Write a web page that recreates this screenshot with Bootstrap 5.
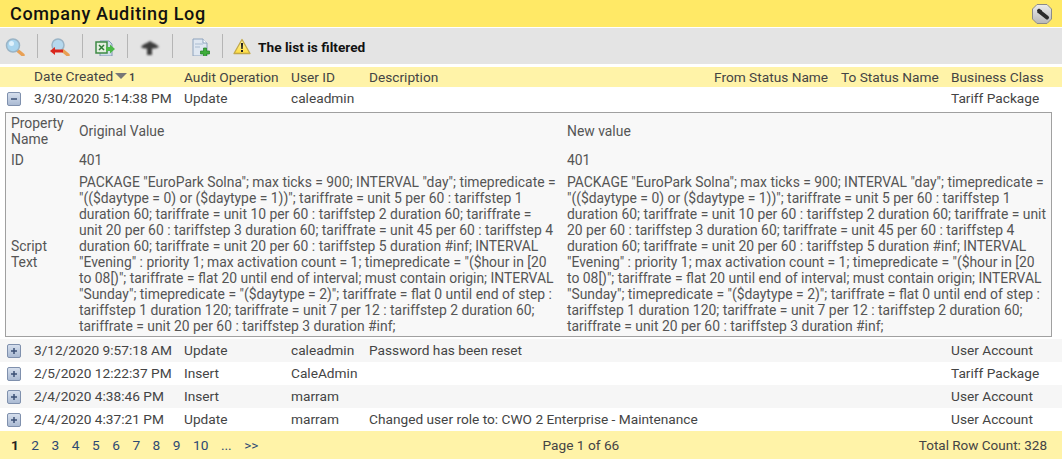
<!DOCTYPE html>
<html lang="en">
  <head>
    <meta charset="UTF-8" />
    <title>Company Auditing Log</title>
    <link rel="stylesheet" href="https://cdn.jsdelivr.net/npm/bootstrap@5.3.6/dist/css/bootstrap.min.css" />
    <style>
      body { font-family: Roboto, "Liberation Sans", sans-serif; font-size: 13.7px; line-height: 16px; color: #444; background: #fff; overflow: hidden; }
      .title-bar { height: 27px; background: #ffe966; padding: 0 10px 0 10px; }
      .title-bar h1 { font-size: 18px; font-weight: 500; letter-spacing: .65px; color: #111; margin: 0; line-height: 27px; }
      .tool-bar { height: 36px; margin-top: 1px; background: #e4e4e4; padding-left: 5px; }
      .tool-icon { width: 20px; height: 20px; display: block; }
      .tool-sep { width: 1px; height: 24px; background: #b5b5b5; margin: 0 12px; }
      .tool-sep-last { margin: 0 10px 0 11px; }
      .icon-new { margin-left: 6px; }
      .icon-soft { filter: blur(1px); }
      .filter-note { font-weight: 700; color: #111; margin-left: 7px; padding-top: 1px; }
      .log-table { table-layout: fixed; width: 1062px; margin: 3px 0 0; border-collapse: collapse; font-size: 13.7px; line-height: 16px; }
      .log-table td, .log-table th { padding: 0 0 0 6px; height: 23px; font-weight: 400; color: #444; white-space: nowrap; vertical-align: middle; border: 0; background: transparent; box-shadow: none; }
      .log-table tbody td:not(:first-child) { padding-bottom: 2px; }
      .log-table thead th { height: 20px; background: #fff3a8; }
      .log-table .shaded td { background: #f6f6f6; }
      .c-toggle { width: 28px; }
      .c-date { width: 150px; }
      .c-op { width: 107px; }
      .c-user { width: 78px; }
      .c-desc { width: 345px; }
      .c-from { width: 127px; }
      .c-to { width: 110px; }
      .toggle-box { width: 14px; height: 14px; display: block; margin-left: 1px; }
      .sort-mark { display: inline-block; width: 0; height: 0; border: 6px solid transparent; border-top: 6px solid #777; border-bottom: 0; margin: 0 2px 0 2px; vertical-align: 2px; }
      .sort-num { font-size: 10px; font-weight: 700; color: #444; }
      .log-table td.detail-cell { padding: 2px 10px 2px 5px; height: auto; white-space: normal; }
      .detail-box { border: 1px solid #a0a0a0; background: #f8f8f8; height: 225px; display: grid; grid-template-columns: 68px 488px 1fr; grid-template-rows: 36px 22px 165px; padding-left: 5px; color: #555; font-size: 13.9px; }
      .detail-box > div { align-self: center; }
      .detail-label { width: 50px; }
      .script-old { padding-right: 10px; }
      .script-new { padding-right: 3px; }
      .pager-bar { height: 28px; background: #fff3a8; padding: 0 15px 0 11px; }
      .pager-links { width: 249px; }
      .pager-links a { color: #2d4a73; text-decoration: none; margin-right: 12.5px; }
      .pager-links b { color: #222; margin-right: 12.5px; font-weight: 700; }
      .pager-mid { padding-right: 17px; }
      .pager-total { font-size: 13.5px; }
    </style>
  </head>

  <body>
    <header class="title-bar d-flex align-items-center justify-content-between">
      <h1>Company Auditing Log</h1>
      <svg width="20" height="20" viewBox="0 0 20 20">
        <defs><linearGradient id="gb" x1="0" y1="0" x2="0" y2="1"><stop offset="0" stop-color="#ececec"/><stop offset="1" stop-color="#b8b8b8"/></linearGradient></defs>
        <path d="M5 .5h10L19.500 5v10L15 19.500H5L.5 15V5z" fill="url(#gb)" stroke="#8a8a8a"/>
        <path d="M8 8l7 5.500" stroke="#2b2b2b" stroke-width="4" stroke-linecap="round"/>
        <path d="M7 4.500l3 2-1 3-3.500-.5-.5-3z" fill="#2b2b2b"/>
      </svg>
    </header>

    <div class="tool-bar d-flex align-items-center">
      <svg class="tool-icon" viewBox="0 0 20 20">
        <path d="M12 14l6 5" stroke="#e8a055" stroke-width="3.500" stroke-linecap="round"/>
        <circle cx="8" cy="9.500" r="6.500" fill="#a8d4ee" stroke="#9ab4c6" stroke-width="1.500"/>
        <circle cx="6.500" cy="7.500" r="2.500" fill="#dff1fb"/>
      </svg>
      <span class="tool-sep"></span>
      <svg class="tool-icon" viewBox="0 0 20 20">
        <path d="M12 14l6 5" stroke="#e8a055" stroke-width="3.500" stroke-linecap="round"/>
        <circle cx="8" cy="9" r="6" fill="#b5d8ee" stroke="#9ab4c6" stroke-width="1.500"/>
        <path d="M0 15l5-4v2.500h8v3H5v2.500z" fill="#d9261c"/>
      </svg>
      <span class="tool-sep"></span>
      <svg class="tool-icon" viewBox="0 0 20 20">
        <path d="M5 5h9l3 3v12H5z" fill="#cfdcea" stroke="#7f97b3"/>
        <rect x="1" y="6" width="11" height="11" fill="#e3eee0" stroke="#3e8a45" stroke-width="1.500"/>
        <path d="M4 9l5 5M9 9l-5 5" stroke="#2f7d38" stroke-width="1.500"/>
        <path d="M11 11h4V8.500l5 4.500-5 4.500V15h-4z" fill="#4cb848"/>
      </svg>
      <span class="tool-sep"></span>
      <svg class="tool-icon icon-soft" viewBox="0 0 20 20">
        <path d="M10 5l3 2c2 .5 4 2 6 4-2 1.500-5 1.500-7 1.500V19H7v-6.500c-2 0-5 0-6-1.500 1.500-2 4-3.500 6-4z" fill="#3c3c3c"/>
      </svg>
      <span class="tool-sep"></span>
      <svg class="tool-icon icon-new" viewBox="0 0 20 20">
        <path d="M2 3h10l4 4v13H2z" fill="#dfe7f1" stroke="#8ea3bd"/>
        <path d="M4 8h8M4 11h5" stroke="#a9bbd0"/>
        <path d="M12 3v4h4" fill="#fff" stroke="#8ea3bd"/>
        <path d="M12.500 12h3v3h3v3h-3v2.500h-3V18h-3v-3h3z" fill="#3fae3b" stroke="#1f7d22" stroke-width=".7"/>
      </svg>
      <span class="tool-sep tool-sep-last"></span>
      <svg width="18" height="17" viewBox="0 0 18 17">
        <defs><linearGradient id="wg" x1="0" y1="0" x2="0" y2="1"><stop offset="0" stop-color="#fff6b0"/><stop offset="1" stop-color="#ffdc3c"/></linearGradient></defs>
        <path d="M9 1.500l8 14H1z" fill="url(#wg)" stroke="#c2a94a" stroke-width="1.300" stroke-linejoin="round"/>
        <path d="M7.900 5h2.200l-.4 6H8.300z M8 12h2v2H8z" fill="#222"/>
      </svg>
      <span class="filter-note">The list is filtered</span>
    </div>

    <table class="table log-table">
      <colgroup>
        <col class="c-toggle" /><col class="c-date" /><col class="c-op" /><col class="c-user" /><col class="c-desc" /><col class="c-from" /><col class="c-to" /><col />
      </colgroup>
      <thead>
        <tr>
          <th></th>
          <th>Date Created<span class="sort-mark"></span><span class="sort-num">1</span></th>
          <th>Audit Operation</th>
          <th>User ID</th>
          <th>Description</th>
          <th>From Status Name</th>
          <th>To Status Name</th>
          <th>Business Class</th>
        </tr>
      </thead>
      <tbody id="logBody"></tbody>
    </table>

    <footer class="pager-bar d-flex align-items-center">
      <div class="pager-links flex-shrink-0">
        <b>1</b><a href="#">2</a><a href="#">3</a><a href="#">4</a><a href="#">5</a><a href="#">6</a><a href="#">7</a><a href="#">8</a><a href="#">9</a><a href="#">10</a><a href="#">...</a><a href="#">&gt;&gt;</a>
      </div>
      <div class="flex-grow-1 text-center pager-mid">Page 1 of 66</div>
      <div class="flex-shrink-0 pager-total">Total Row Count: 328</div>
    </footer>

    <script>
      const scriptText = 'PACKAGE "EuroPark Solna"; max ticks = 900; INTERVAL "day"; timepredicate = "(($daytype = 0) or ($daytype = 1))"; tariffrate = unit 5 per 60 : tariffstep 1 duration 60; tariffrate = unit 10 per 60 : tariffstep 2 duration 60; tariffrate = unit 20 per 60 : tariffstep 3 duration 60; tariffrate = unit 45 per 60 : tariffstep 4 duration 60; tariffrate = unit 20 per 60 : tariffstep 5 duration #inf; INTERVAL "Evening" : priority 1; max activation count = 1; timepredicate = "($hour in [20 to 08[)"; tariffrate = flat 20 until end of interval; must contain origin; INTERVAL "Sunday"; timepredicate = "($daytype = 2)"; tariffrate = flat 0 until end of step : tariffstep 1 duration 120; tariffrate = unit 7 per 12 : tariffstep 2 duration 60; tariffrate = unit 20 per 60 : tariffstep 3 duration #inf;';

      const logRows = [
        { date: "3/30/2020 5:14:38 PM", op: "Update", user: "caleadmin", desc: "", cls: "Tariff Package", open: true },
        { date: "3/12/2020 9:57:18 AM", op: "Update", user: "caleadmin", desc: "Password has been reset", cls: "User Account", shaded: true },
        { date: "2/5/2020 12:22:37 PM", op: "Insert", user: "CaleAdmin", desc: "", cls: "Tariff Package" },
        { date: "2/4/2020 4:38:46 PM", op: "Insert", user: "marram", desc: "", cls: "User Account", shaded: true },
        { date: "2/4/2020 4:37:21 PM", op: "Update", user: "marram", desc: "Changed user role to: CWO 2 Enterprise - Maintenance", cls: "User Account" },
      ];

      function toggleIcon(open) {
        const bar = open ? "" : '<path d="M7 4v6" stroke="#3a4f74" stroke-width="1.500"/>';
        return `<svg class="toggle-box" viewBox="0 0 14 14"><defs><linearGradient id="tg" x1="0" y1="0" x2="0" y2="1"><stop offset="0" stop-color="#d7e0ee"/><stop offset="1" stop-color="#a9b9d2"/></linearGradient></defs><rect x=".5" y=".5" width="13" height="13" rx="1.500" fill="url(#tg)" stroke="#7f90ad"/><path d="M4 7h6" stroke="#3a4f74" stroke-width="1.500"/>${bar}</svg>`;
      }

      let html = "";
      for (const row of logRows) {
        html += `<tr class="${row.shaded ? "shaded" : ""}">
          <td>${toggleIcon(row.open)}</td>
          <td>${row.date}</td><td>${row.op}</td><td>${row.user}</td><td>${row.desc}</td><td></td><td></td><td>${row.cls}</td>
        </tr>`;
        if (row.open) {
          html += `<tr><td class="detail-cell" colspan="8"><div class="detail-box">
            <div class="detail-label">Property Name</div><div>Original Value</div><div>New value</div>
            <div>ID</div><div>401</div><div>401</div>
            <div class="detail-label">Script Text</div><div class="script-old">${scriptText}</div><div class="script-new">${scriptText}</div>
          </div></td></tr>`;
        }
      }
      document.querySelector("#logBody").innerHTML = html;
    </script>
  </body>
</html>
